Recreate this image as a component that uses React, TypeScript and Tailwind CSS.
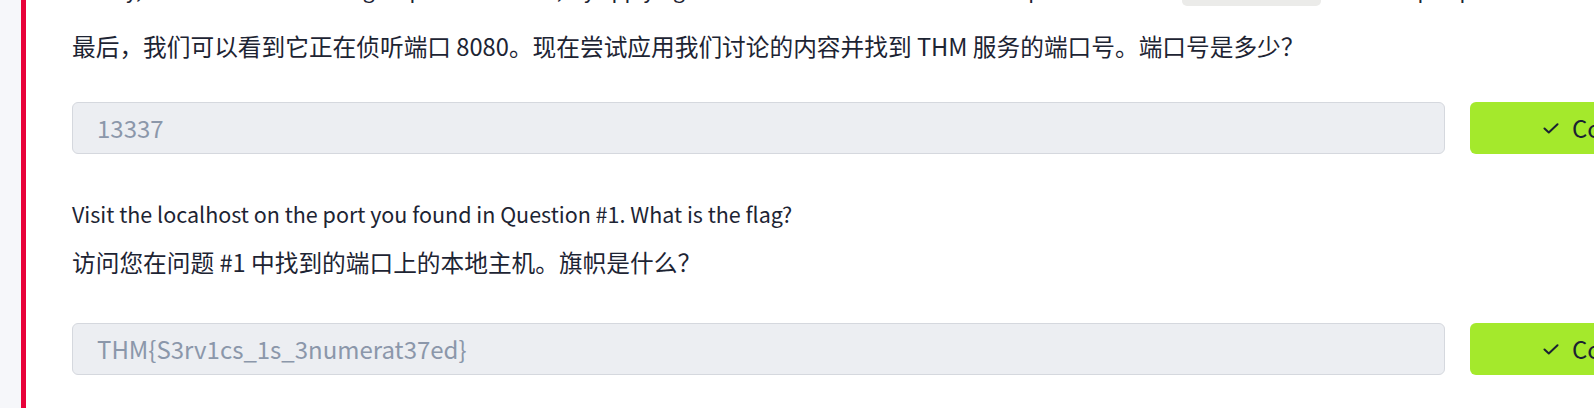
const font = { fontFamily: '"Noto Sans CJK SC", "Noto Sans", sans-serif' };

function CheckMark() {
  return (
    <svg width="16" height="11" viewBox="0 0 16 11" fill="none" className="shrink-0">
      <path d="M1.5 5.5 5.8 9.5 14.5 1.2" stroke="#1b2232" strokeWidth="2" strokeLinecap="round" strokeLinejoin="round" />
    </svg>
  );
}

function AnswerRow({ value, mt }: { value: string; mt: string }) {
  return (
    <div className={`flex gap-[25px] ${mt}`}>
      <div className="w-[1373px] h-[52px] shrink-0 rounded-[6px] border border-[#d5d8de] bg-[#eceef2] flex items-center pl-[24px] text-[24px] text-[#8b97aa]">
        {value}
      </div>
      <button className="w-[220px] h-[52px] shrink-0 rounded-[6px] bg-[#a4e92c] flex items-center gap-[13px] pl-[73px] text-[24px] text-[#1b2232]">
        <CheckMark />
        <span>Correct</span>
      </button>
    </div>
  );
}

export default function App() {
  return (
    <div className="w-screen h-[408px] flex overflow-hidden bg-white" style={font}>
      <div className="w-[21px] shrink-0 bg-[#f6f7fa]" />
      <div className="w-[5px] shrink-0 bg-[#e8023a]" />
      <div className="flex-1 flex flex-col pl-[46px] text-[#1d2433] overflow-hidden">
        <p className="text-[21px] leading-[30px] -mt-[26px] whitespace-nowrap">
          Finally, we can see it's listening on port 8080. Now, try applying what we've discussed and find the port number of{" "}
          <span className="inline-block w-[139px] text-center rounded-[5px] bg-[#ebebe9] pb-[4px] font-mono text-[18px] leading-none">
            netstat -an
          </span>{" "}
          and the open port. What is the port number?
        </p>
        <p className="text-[23.7px] leading-[36px] mt-[22px] whitespace-nowrap">
          最后，我们可以看到它正在侦听端口 8080。现在尝试应用我们讨论的内容并找到 THM 服务的端口号。端口号是多少？
        </p>
        <AnswerRow value="13337" mt="mt-[38px]" />
        <p className="text-[21.5px] leading-[30px] mt-[45px] whitespace-nowrap">
          Visit the localhost on the port you found in Question #1. What is the flag?
        </p>
        <p className="text-[23.7px] leading-[36px] mt-[15px] whitespace-nowrap">
          访问您在问题 #1 中找到的端口上的本地主机。旗帜是什么？
        </p>
        <AnswerRow value="THM{S3rv1cs_1s_3numerat37ed}" mt="mt-[43px]" />
      </div>
    </div>
  );
}
